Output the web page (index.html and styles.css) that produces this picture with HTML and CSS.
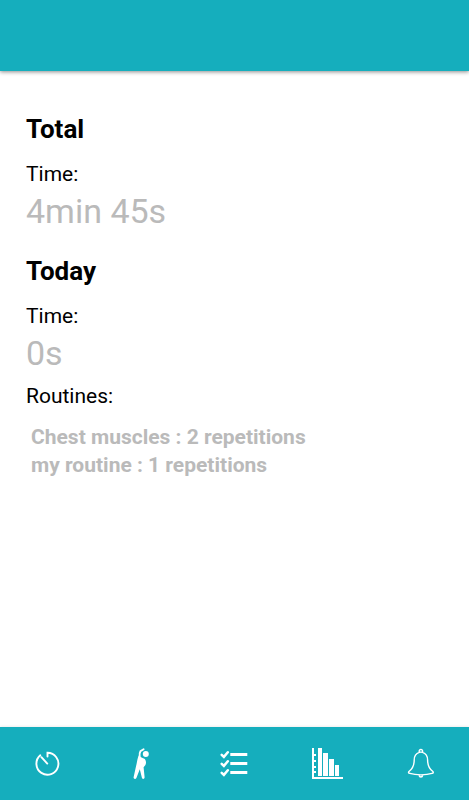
FILE: index.html
```html
<!DOCTYPE html>
<html lang="en">
<head>
<meta charset="utf-8">
<meta name="viewport" content="width=device-width, initial-scale=1">
<title>Statistics</title>
<link rel="stylesheet" href="styles.css">
</head>
<body>
<header class="top-bar"></header>
<main class="content">
  <section class="group">
    <h2 class="title">Total</h2>
    <p class="label">Time:</p>
    <p class="value">4min 45s</p>
  </section>
  <section class="group">
    <h2 class="title">Today</h2>
    <p class="label">Time:</p>
    <p class="value">0s</p>
    <p class="label routines-label">Routines:</p>
    <ul class="routines">
      <li>Chest muscles : 2 repetitions</li>
      <li>my routine : 1 repetitions</li>
    </ul>
  </section>
</main>
<nav class="tabs">
  <a class="tab" href="#timer" aria-label="Timer">
    <svg class="icon" viewBox="9 5 36 37"><path class="line" d="M20.3 15.3A11 11 0 1 0 27.5 12.7V16.5M21.4 17.2L27.3 23.6" stroke-width="1.9"/></svg>
  </a>
  <a class="tab" href="#exercises" aria-label="Exercises">
    <svg class="icon" viewBox="8 5 36 37"><circle class="fill" cx="30.8" cy="14" r="3"/><path class="line" d="M28.6 9.2L25.4 11.2Q24.2 13 24.7 17" stroke-width="1.9"/><path class="fill" d="M23.7 15.5C25.3 17.6 28 17.8 29.5 18.8C31.6 21 31.7 24.5 28.6 27.2L29.6 37.3C29.6 39.2 27.2 39.4 26.9 37.8L24.8 29.2L21.4 38C20.6 39.6 18.3 39 18.6 37.2L20.8 27.2C22 23 22.2 19 23.7 15.5Z"/></svg>
  </a>
  <a class="tab" href="#routines" aria-label="Routines">
    <svg class="icon" viewBox="11 5 36 37"><path class="line" d="M16.7 14.8L18.9 16.9L22.8 12.2M16.7 23.8L18.9 25.9L22.8 21.2M16.7 32.8L18.9 34.9L22.8 30.2" stroke-width="2.5"/><path class="fill" d="M25.3 13H42.3V16H25.3ZM25.3 22H42.3V25H25.3ZM25.3 31H42.3V34H25.3Z"/></svg>
  </a>
  <a class="tab" href="#statistics" aria-label="Statistics">
    <svg class="icon" viewBox="10 5 36 37"><path class="fill" d="M12 8H14V37H43V39H12ZM14 14H16V16H14ZM14 20H16V22H14ZM14 26H16V28H14ZM14 31H16V33H14ZM18 8H22V36H18ZM23 13H28V36H23ZM29 19H34V36H29ZM35 25H39V36H35Z"/></svg>
  </a>
  <a class="tab" href="#reminders" aria-label="Reminders">
    <svg class="icon" viewBox="9 5 36 37"><path class="line" d="M24.3 12.3C20.5 13.5 19.2 16.3 19.2 20C19.2 25.5 18.2 28.2 14.2 31.3C13 32.4 13.5 33 14.8 33.4C21 35.3 31 35.3 37 33.4C38.3 33 38.8 32.4 37.6 31.3C33.6 28.2 32.6 25.5 32.6 20C32.6 16.3 31.3 13.5 27.5 12.3Q25.9 11.9 24.3 12.3ZM24.3 12.1C23.3 8.7 28.5 8.7 27.5 12.1M24 35C24.5 37.6 27.3 37.6 27.8 35" stroke-width="1.4"/></svg>
  </a>
</nav>
</body>
</html>
```
FILE: styles.css
```css
* {
  box-sizing: border-box;
}

body {
  margin: 0;
  min-height: 100vh;
  display: flex;
  flex-direction: column;
  background: #fff;
  color: #000;
  font-family: Roboto, "Liberation Sans", sans-serif;
}

.top-bar {
  height: 71px;
  background: #15aebd;
  box-shadow: 0 1px 4px rgba(0, 0, 0, 0.45);
}

.content {
  flex: 1;
  display: flex;
  flex-direction: column;
  gap: 23px;
  padding: 42px 26px 24px;
}

.title,
.label,
.value,
.routines {
  margin: 0;
}

.title {
  margin-bottom: 15px;
  font-size: 26px;
  line-height: 32px;
  font-weight: 700;
}

.label {
  font-size: 21px;
  line-height: 28px;
}

.value {
  margin-top: 2px;
  color: #bababa;
  font-size: 34px;
  line-height: 42px;
}

.routines-label {
  margin-top: 8px;
}

.routines {
  padding: 13px 5px 0;
  list-style: none;
  color: #bababa;
  font-size: 21px;
  line-height: 28px;
  font-weight: 700;
}

.tabs {
  display: flex;
  height: 73px;
  background: #15aebd;
  box-shadow: 0 0 3px rgba(0, 0, 0, 0.12);
}

.tab {
  flex: 1;
  display: flex;
  align-items: center;
  justify-content: center;
}

.icon {
  width: 36px;
  height: 37px;
}

.fill {
  fill: #fff;
}

.line {
  fill: none;
  stroke: #fff;
  stroke-linecap: round;
}
```
